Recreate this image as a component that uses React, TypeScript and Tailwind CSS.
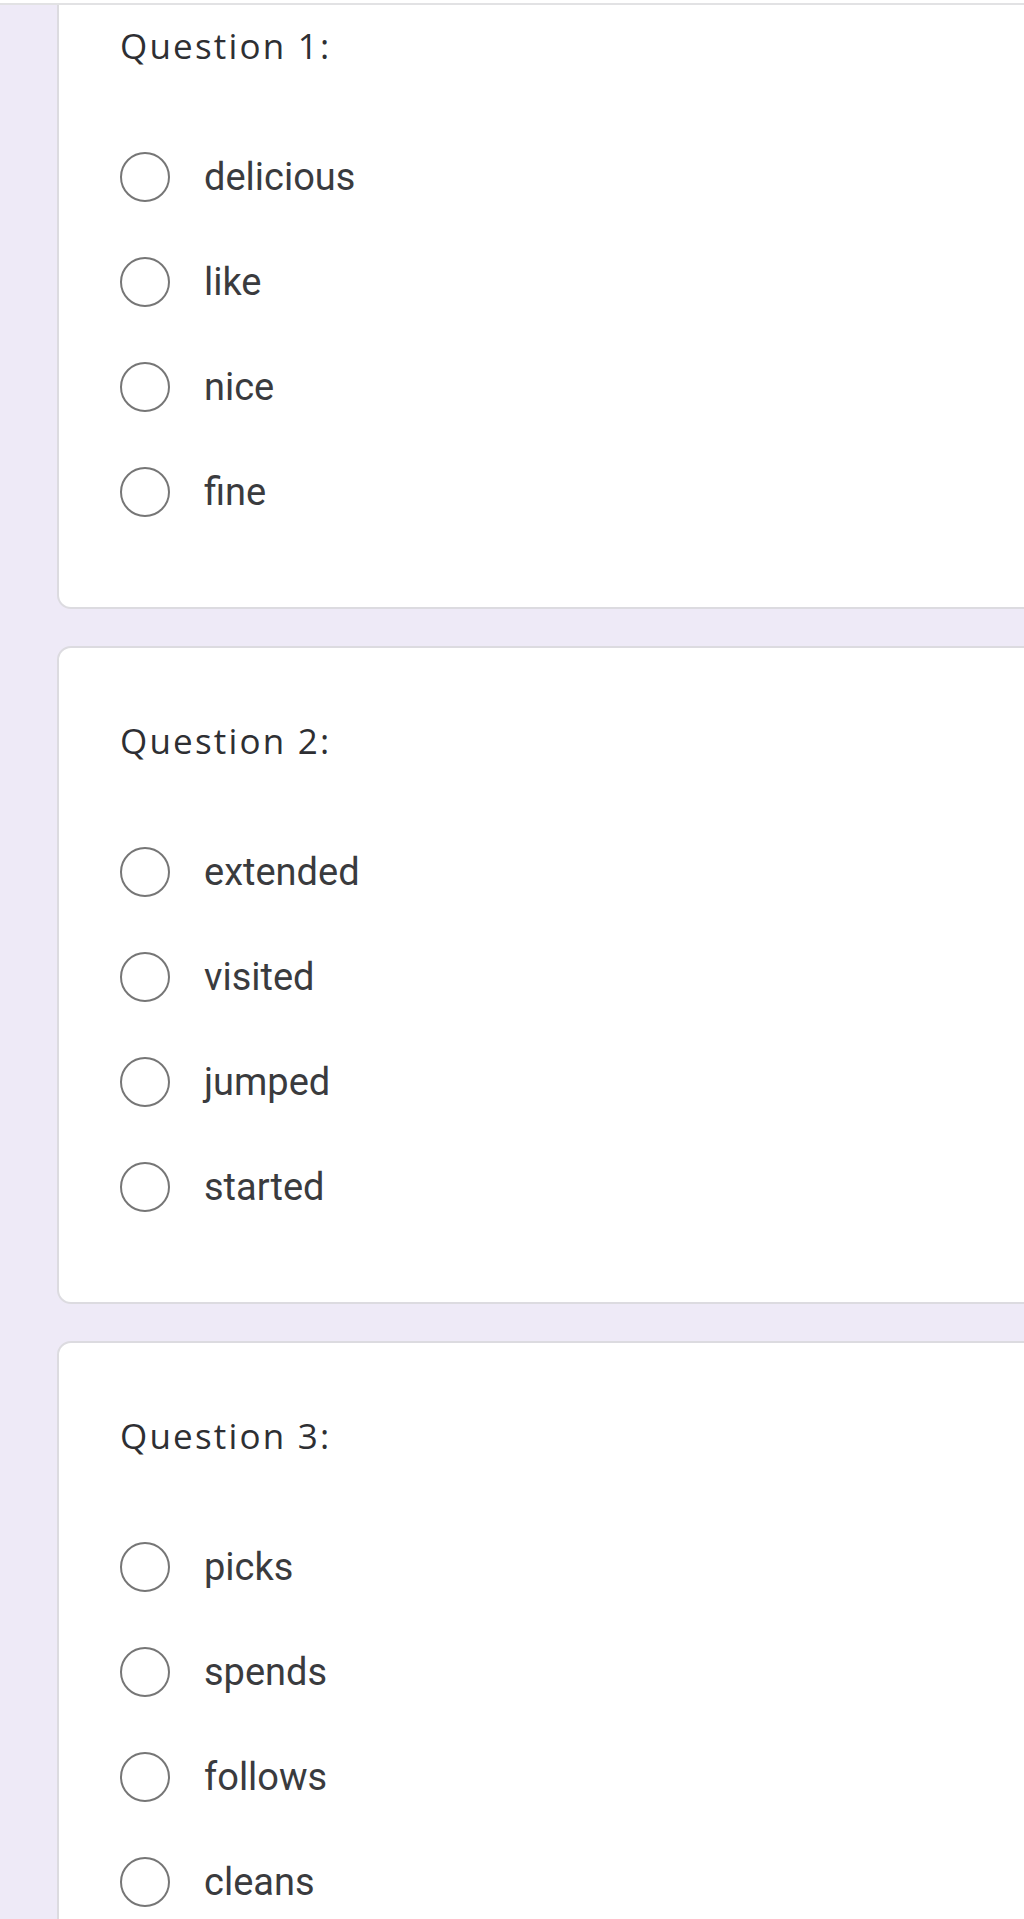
import React from "react";

const questions = [
  { title: "Question 1:", options: ["delicious", "like", "nice", "fine"] },
  { title: "Question 2:", options: ["extended", "visited", "jumped", "started"] },
  { title: "Question 3:", options: ["picks", "spends", "follows", "cleans"] },
];

function Radio({ label }: { label: string }) {
  return (
    <div className="flex h-[105px] items-center">
      <span className="block h-[50px] w-[50px] shrink-0 rounded-full border-[2.5px] border-[#767676]" />
      <span
        className="ml-[34px] text-[38px] leading-[48px] text-[#3a3b3e]"
        style={{ fontFamily: "Roboto, 'Liberation Sans', sans-serif" }}
      >
        {label}
      </span>
    </div>
  );
}

function QuestionCard({ title, options, first }: { title: string; options: string[]; first?: boolean }) {
  return (
    <div
      className={
        first
          ? "w-[1100px] rounded-b-[14px] border-2 border-t-0 border-[#dcdbe0] bg-white pl-[61px] pt-[16.5px] pb-[62.5px]"
          : "w-[1100px] rounded-[14px] border-2 border-[#dcdbe0] bg-white pl-[61px] pt-[69px] pb-[62.5px]"
      }
    >
      <div
        className="h-[48px] text-[35px] leading-[48px] tracking-[2.2px] text-[#2e2f33]"
        style={{ fontFamily: "'Open Sans', sans-serif" }}
      >
        {title}
      </div>
      <div className="mt-[54.5px] flex flex-col">
        {options.map((o) => (
          <Radio key={o} label={o} />
        ))}
      </div>
    </div>
  );
}

export default function App() {
  return (
    <div className="h-[1919px] w-[1024px] overflow-hidden bg-[#eeeaf7]">
      <div className="h-[3px] bg-white" />
      <div className="h-[2px] bg-[#e2e2e4]" />
      <div className="flex flex-col gap-[37px] pl-[57px]">
        {questions.map((q, i) => (
          <QuestionCard key={q.title} title={q.title} options={q.options} first={i === 0} />
        ))}
      </div>
    </div>
  );
}
